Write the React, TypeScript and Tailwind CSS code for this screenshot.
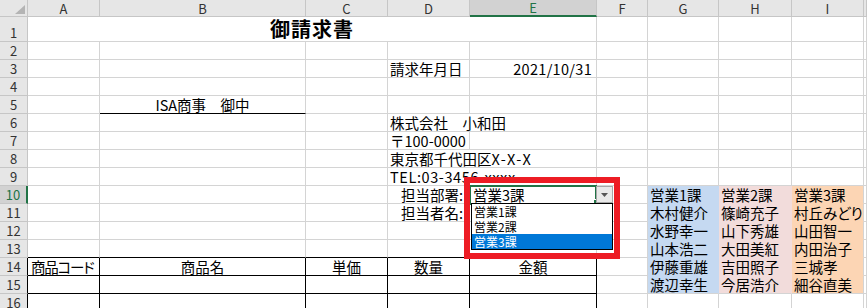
import React from "react";

const G = "border-r border-b border-[#d4d4d4] bg-white";
const BK = "border-r border-b border-black bg-white";
const BB = "border-r border-r-[#d4d4d4] border-b border-b-black bg-white";
const T = "flex items-end whitespace-nowrap px-[2px] text-[14.5px] leading-[17px] text-black";
const BLUE = "border-r border-b border-[#c5d9f1] bg-[#c5d9f1]";
const PINK = "border-r border-b border-[#f2dcdb] bg-[#f2dcdb]";
const ORNG = "border-r border-r-[#d4d4d4] border-b border-b-[#fcd5b4] bg-[#fcd5b4]";
const BLUE_L = "border-r border-r-[#c5d9f1] border-b border-b-[#d4d4d4] bg-[#c5d9f1]";
const PINK_L = "border-r border-r-[#f2dcdb] border-b border-b-[#d4d4d4] bg-[#f2dcdb]";
const ORNG_L = "border-r border-b border-[#d4d4d4] bg-[#fcd5b4]";

const RH = "flex items-end justify-center bg-[#e6e6e6] border-r border-b border-[#c6c6c6] text-[13px] leading-[17px] text-[#333]";
const RH_BLK = "flex items-end justify-center bg-[#e6e6e6] border-r border-r-black border-b border-b-[#c6c6c6] text-[13px] leading-[17px] text-[#333]";
const RH_SEL = "flex items-end justify-center bg-[#d2d2d2] border-r-2 border-r-[#217346] border-b border-b-[#c6c6c6] text-[13px] leading-[17px] text-[#217346]";
const CH = "flex items-center justify-center bg-[#e6e6e6] border-r border-b border-[#c6c6c6] text-[13px] leading-[15px] text-[#333]";
const CH_SEL = "flex items-center justify-center bg-[#d2d2d2] border-r border-r-[#c6c6c6] border-b-2 border-b-[#217346] text-[13px] leading-[15px] text-[#217346]";

function Rh({ n }: { n: number }) {
  return <div className={RH}>{n}</div>;
}

function Empty({ k }: { k: number }) {
  return (
    <>
      {Array.from({ length: k }).map((_, i) => (
        <div key={i} className={G} />
      ))}
    </>
  );
}

export default function App() {
  return (
    <div className="relative w-[867px] h-[308px] overflow-hidden bg-white font-['Noto_Sans_CJK_JP','Liberation_Sans',sans-serif]">
      <div className="grid grid-cols-[28px_72px_206px_82px_82px_127px_51px_71px_73px_72px_1fr] grid-rows-[17px_25px_repeat(16,18px)]">
        {/* column header */}
        <div className="relative bg-[#e6e6e6] border-r border-b border-[#c6c6c6]">
          <svg className="absolute left-[15px] top-[5px]" width="10" height="9" viewBox="0 0 10 9">
            <polygon points="10,0 10,9 0,9" fill="#b4b4b4" />
          </svg>
        </div>
        <div className={CH}>A</div>
        <div className={CH}>B</div>
        <div className={CH}>C</div>
        <div className={CH}>D</div>
        <div className={CH_SEL}>E</div>
        <div className={CH}>F</div>
        <div className={CH}>G</div>
        <div className={CH}>H</div>
        <div className={CH}>I</div>
        <div className={CH}></div>

        {/* row 1 */}
        <Rh n={1} />
        <div className={`${G} col-span-5 flex items-end justify-center pb-[1px] text-[20px] leading-[22px] font-bold tracking-[1px] text-black`}>御請求書</div>
        <Empty k={5} />

        {/* row 2 */}
        <Rh n={2} />
        <Empty k={10} />

        {/* row 3 */}
        <Rh n={3} />
        <Empty k={3} />
        <div className={`${G} ${T}`}>請求年月日</div>
        <div className={`${G} ${T} justify-end pr-[4px] tracking-[0.3px]`}>2021/10/31</div>
        <Empty k={5} />

        {/* row 4 */}
        <Rh n={4} />
        <Empty k={10} />

        {/* row 5 */}
        <Rh n={5} />
        <Empty k={1} />
        <div className={`${BB} ${T} justify-center`}>ISA商事　御中</div>
        <Empty k={8} />

        {/* row 6 */}
        <Rh n={6} />
        <Empty k={3} />
        <div className={`${G} ${T} col-span-2`}>株式会社　小和田</div>
        <Empty k={5} />

        {/* row 7 */}
        <Rh n={7} />
        <Empty k={3} />
        <div className={`${G} ${T}`}>〒100-0000</div>
        <Empty k={6} />

        {/* row 8 */}
        <Rh n={8} />
        <Empty k={3} />
        <div className={`${G} ${T} col-span-2`}>東京都千代田区<span className="tracking-[1.5px]">X-X-X</span></div>
        <Empty k={5} />

        {/* row 9 */}
        <Rh n={9} />
        <Empty k={3} />
        <div className={`${G} ${T} col-span-2 tracking-[0.6px]`}>TEL:03-3456-xxxx</div>
        <Empty k={5} />

        {/* row 10 */}
        <div className={RH_SEL}>10</div>
        <Empty k={3} />
        <div className={`${G} ${T} justify-end pr-[6px]`}>担当部署:</div>
        <div className={`${G} ${T} pl-[3px]`}>営業3課</div>
        <Empty k={1} />
        <div className={`${BLUE} ${T}`}>営業1課</div>
        <div className={`${PINK} ${T}`}>営業2課</div>
        <div className={`${ORNG} ${T}`}>営業3課</div>
        <Empty k={1} />

        {/* row 11 */}
        <Rh n={11} />
        <Empty k={3} />
        <div className={`${G} ${T} justify-end pr-[6px]`}>担当者名:</div>
        <Empty k={2} />
        <div className={`${BLUE} ${T}`}>木村健介</div>
        <div className={`${PINK} ${T}`}>篠崎充子</div>
        <div className={`${ORNG} ${T} [font-feature-settings:'palt']`}>村丘みどり</div>
        <Empty k={1} />

        {/* row 12 */}
        <Rh n={12} />
        <Empty k={6} />
        <div className={`${BLUE} ${T}`}>水野幸一</div>
        <div className={`${PINK} ${T}`}>山下秀雄</div>
        <div className={`${ORNG} ${T}`}>山田智一</div>
        <Empty k={1} />

        {/* row 13 */}
        <Rh n={13} />
        <div className={BB} />
        <div className={BB} />
        <div className={BB} />
        <div className={BB} />
        <div className={BB} />
        <Empty k={1} />
        <div className={`${BLUE} ${T}`}>山本浩二</div>
        <div className={`${PINK} ${T}`}>大田美紅</div>
        <div className={`${ORNG} ${T}`}>内田治子</div>
        <Empty k={1} />

        {/* row 14 */}
        <div className={RH_BLK}>14</div>
        <div className={`${BK} ${T} pl-[3px] tracking-[-1.2px] [font-feature-settings:'palt']`}>商品コード</div>
        <div className={`${BK} ${T} justify-center`}>商品名</div>
        <div className={`${BK} ${T} justify-center`}>単価</div>
        <div className={`${BK} ${T} justify-center`}>数量</div>
        <div className={`${BK} ${T} justify-center`}>金額</div>
        <Empty k={1} />
        <div className={`${BLUE} ${T}`}>伊藤重雄</div>
        <div className={`${PINK} ${T}`}>吉田照子</div>
        <div className={`${ORNG} ${T}`}>三城孝</div>
        <Empty k={1} />

        {/* row 15 */}
        <div className={RH_BLK}>15</div>
        <div className={BK} />
        <div className={BK} />
        <div className={BK} />
        <div className={BK} />
        <div className={BK} />
        <Empty k={1} />
        <div className={`${BLUE_L} ${T}`}>渡辺幸生</div>
        <div className={`${PINK_L} ${T}`}>今居浩介</div>
        <div className={`${ORNG_L} ${T}`}>細谷直美</div>
        <Empty k={1} />

        {/* row 16 */}
        <div className={RH_BLK}>16</div>
        <div className={BK} />
        <div className={BK} />
        <div className={BK} />
        <div className={BK} />
        <div className={BK} />
        <Empty k={5} />
      </div>

      {/* active cell */}
      <div className="absolute left-[469px] top-[185px] w-[128px] h-[20px] border-2 border-[#217346]" />
      <div className="absolute left-[593px] top-[199px] w-[5px] h-[5px] bg-[#217346] border border-white" />

      {/* dropdown button */}
      <div className="absolute left-[596px] top-[186px] w-[17px] h-[17px] bg-[#e9e9e9] border border-[#a6a6a6] flex items-center justify-center">
        <svg width="7" height="4" viewBox="0 0 7 4">
          <polygon points="0,0 7,0 3.5,4" fill="#555" />
        </svg>
      </div>

      {/* dropdown list */}
      <div className="absolute left-[471px] top-[203px] w-[142px] h-[47px] bg-white border border-black flex flex-col text-[12px] leading-[15px] text-black">
        <div className="h-[15px] pl-[2px]">営業1課</div>
        <div className="h-[15px] pl-[2px]">営業2課</div>
        <div className="h-[15px] pl-[2px] bg-[#0078d7] text-white">営業3課</div>
      </div>

      {/* red highlight box */}
      <div className="absolute left-[464px] top-[177px] w-[156px] h-[82px] border-[6px] border-[#ed1c24]" />
    </div>
  );
}
